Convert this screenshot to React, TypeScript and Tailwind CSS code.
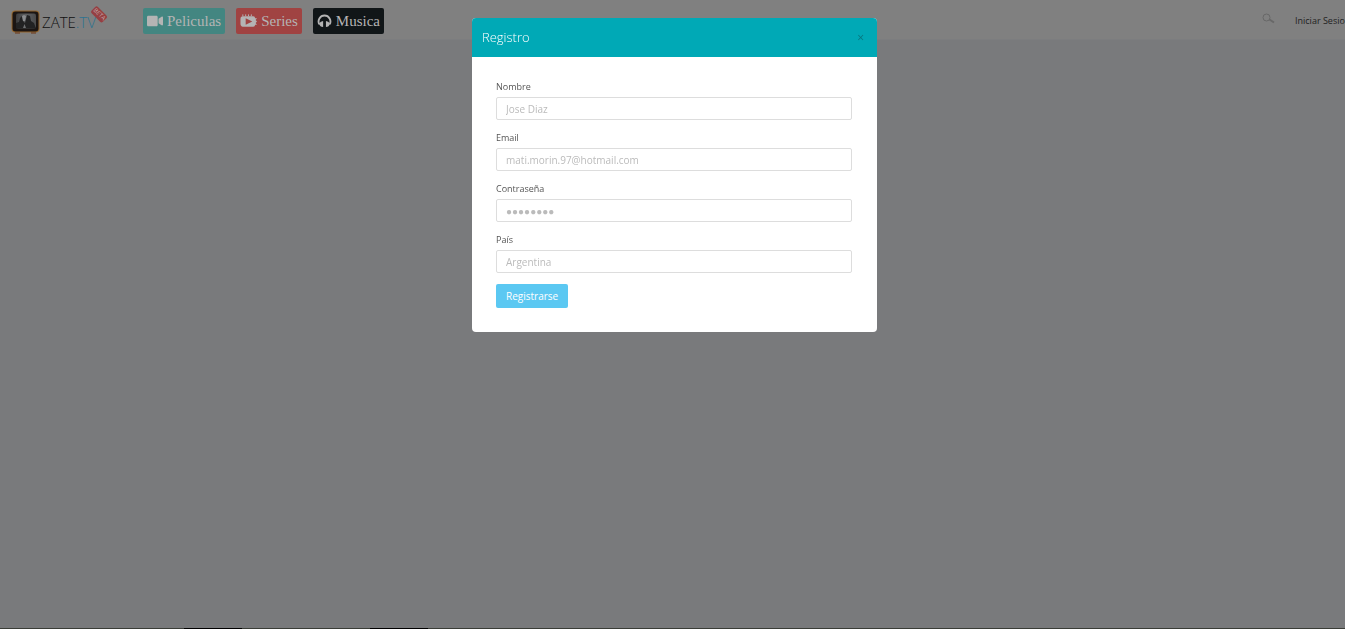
import { FaVideo } from 'react-icons/fa';

const fields = [
  { id: 'nombre', label: 'Nombre', type: 'text', placeholder: 'Jose Diaz' },
  { id: 'email', label: 'Email', type: 'email', placeholder: 'mati.morin.97@hotmail.com' },
  { id: 'password', label: 'Contraseña', type: 'password', placeholder: '●●●●●●●●' },
  { id: 'pais', label: 'País', type: 'text', placeholder: 'Argentina' },
];

function TvLogo() {
  return (
    <svg viewBox="0 0 30 24" className="h-6 w-[30px]" aria-hidden="true">
      <defs>
        <linearGradient id="screen" x1="0" y1="0" x2="1" y2="0">
          <stop offset="0" stopColor="#3c3c3d" />
          <stop offset="0.5" stopColor="#606163" />
          <stop offset="1" stopColor="#4a4a4b" />
        </linearGradient>
      </defs>
      <rect x="0.5" y="0.5" width="28" height="22" rx="4" fill="#94652c" />
      <rect x="1.5" y="1.5" width="26" height="20" rx="3" fill="#1b1513" />
      <rect x="5" y="3.5" width="20" height="15" rx="2" fill="url(#screen)" />
      <path d="M5 18.5 V13 L8 12 L9 8 L11 6 L12 11 L14 13 L16 5 L19 6 L20 11 L23 13 L25 18.5 Z" fill="#222223" />
      <path d="M11 6 L13 5 L15 6 L14 11 L12 11 Z" fill="#8b8c8e" />
      <path d="M12 18 L13.500 14 L15 18 Z" fill="#6f7072" />
      <path d="M4 23 H9 M20 23 H25" stroke="#6b3414" strokeWidth="1" />
    </svg>
  );
}

function SeriesIcon() {
  return (
    <svg viewBox="0 0 18 14" className="h-[14px] w-[17px]" aria-hidden="true">
      <path
        d="M3 2 H14 Q16 2 16 4 L18 4 L16.500 6 L18 7.500 L16.500 9 L18 11 L16 11 Q16 13 14 13 H3 Q0.500 13 0.500 10 V5 Q0.500 2 3 2 Z"
        fill="currentColor"
      />
      <path d="M3 0 V2 M6 0 V2 M9 0 V2 M12 0 V2" stroke="currentColor" />
      <path d="M6 4 L13 7.500 L6 11 Z" fill="#a04342" />
    </svg>
  );
}

function HeadphonesIcon() {
  return (
    <svg viewBox="0 0 16 14" className="h-[14px] w-[15px]" fill="none" aria-hidden="true">
      <path d="M2.500 10.500 A6.300 6.300 0 1 1 13.500 10.500" stroke="currentColor" strokeWidth="2" />
      <path d="M6.500 7 V13.500 Q3 13 2.500 10.500 Q3 7.500 6.500 7 Z" fill="currentColor" />
      <path d="M9.500 7 V13.500 Q13 13 13.500 10.500 Q13 7.500 9.500 7 Z" fill="currentColor" />
    </svg>
  );
}

function SearchIcon() {
  return (
    <svg viewBox="0 0 13 11" className="h-[11px] w-[13px]" fill="none" stroke="currentColor" aria-hidden="true">
      <circle cx="4.500" cy="4.500" r="3.500" />
      <path d="M7.500 6.500 L12 9.500" strokeWidth="2" />
    </svg>
  );
}

function Navbar() {
  return (
    <header className="flex h-10 items-start overflow-hidden border-b border-[#7c7d7f] bg-[#808080] pl-[11px]">
      <a href="#" className="relative mt-[10px] flex w-[85px] items-center gap-px">
        <TvLogo />
        <span className="text-[15px] leading-6 font-light text-[#111]">
          ZATE<span className="text-[#2e7391]">.TV</span>
        </span>
        <span className="absolute top-0 -right-[11px] rotate-45 rounded-xs bg-[#963f42] px-px text-[6px] leading-[9px] text-[#c0a5a5]">
          BETA
        </span>
      </a>

      <nav className="mt-2 ml-[47px] flex gap-[11px] font-['Liberation_Serif',serif] text-[15px] text-[#b4b4b4]">
        <a href="#" className="flex h-[26px] items-center gap-1 rounded-xs bg-[#438681] px-1">
          <FaVideo className="size-4" />
          Peliculas
        </a>
        <a href="#" className="flex h-[26px] items-center gap-1 rounded-xs bg-[#a04342] px-1">
          <SeriesIcon />
          Series
        </a>
        <a href="#" className="flex h-[26px] items-center gap-1 rounded-xs bg-[#111618] px-1">
          <HeadphonesIcon />
          Musica
        </a>
      </nav>

      <div className="ml-auto flex items-start gap-5">
        <button type="button" aria-label="Buscar" className="mt-[13px] text-[#686868]">
          <SearchIcon />
        </button>
        <a href="#" className="mt-[14px] w-[50px] text-[9px] leading-[14px] whitespace-nowrap text-[#222]">
          Iniciar Sesion
        </a>
      </div>
    </header>
  );
}

function RegisterModal() {
  return (
    <div className="fixed inset-0 flex items-start justify-center pt-[18px] pl-1">
      <div role="dialog" aria-labelledby="titulo" className="w-[405px] overflow-hidden rounded bg-white">
        <div className="flex h-[39px] items-center justify-between bg-[#00a9b6] px-[10px]">
          <h2 id="titulo" className="text-[13px] font-light text-white">
            Registro
          </h2>
          <button type="button" aria-label="Cerrar" className="px-[3px] text-xs leading-4 text-[#08767f]">
            ×
          </button>
        </div>

        <form className="flex flex-col items-start gap-[11px] pt-[23px] pr-[25px] pb-6 pl-6">
          {fields.map((field) => (
            <div key={field.id} className="flex w-full flex-col gap-[3px]">
              <label htmlFor={field.id} className="text-[9px] leading-[14px] text-[#555]">
                {field.label}
              </label>
              <input
                id={field.id}
                type={field.type}
                placeholder={field.placeholder}
                className="h-[23px] w-full rounded-xs border border-[#ddd] px-[9px] pt-px text-[10px] text-[#777] placeholder:text-[#bbb]"
              />
            </div>
          ))}
          <button type="submit" className="h-6 rounded-xs bg-[#5bc8f2] px-[10px] text-[10px] text-white">
            Registrarse
          </button>
        </form>
      </div>
    </div>
  );
}

export default function App() {
  return (
    <div className="flex min-h-screen flex-col bg-[#797a7c] font-['Open_Sans',sans-serif]">
      <Navbar />
      <main className="flex-1" />
      {/* Top edge of the poster strip */}
      <footer className="flex h-px gap-[128px] bg-[#3a3d37] pl-[184px]">
        <div className="w-[58px] bg-black" />
        <div className="w-[58px] bg-black" />
      </footer>
      <RegisterModal />
    </div>
  );
}
